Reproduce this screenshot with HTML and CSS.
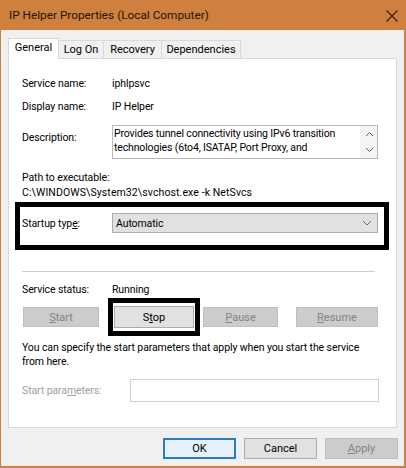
FILE: index.html
```html
<!DOCTYPE html>
<html>
<head>
<meta charset="utf-8">
<title>IP Helper Properties</title>
<link rel="stylesheet" href="styles.css">
</head>
<body>
<div class="window">
  <div class="titlebar">
    <span class="title">IP Helper Properties (Local Computer)</span>
    <svg class="close" width="12" height="12" viewBox="0 0 12 12"><path d="M0.5 0.5 L11.5 11.5 M11.5 0.5 L0.5 11.5" stroke="#3a1e0c" stroke-width="1.1" fill="none"/></svg>
  </div>
  <div class="client">
    <div class="tabs">
      <div class="tab active t-general">General</div>
      <div class="tab t-logon">Log On</div>
      <div class="tab t-recovery">Recovery</div>
      <div class="tab t-deps">Dependencies</div>
    </div>
    <div class="panel">
      <div class="row r-service"><span class="label">Service name:</span><span class="value">iphlpsvc</span></div>
      <div class="row r-display"><span class="label">Display name:</span><span class="value">IP Helper</span></div>
      <div class="row r-desc">
        <span class="label desc-label">Description:</span>
        <div class="desc-box">
          <div class="desc-text">Provides tunnel connectivity using IPv6 transition technologies (6to4, ISATAP, Port Proxy, and</div>
          <div class="scroll">
            <svg width="9" height="6" viewBox="0 0 9 6"><path d="M1 5 L4.5 1.5 L8 5" stroke="#606060" stroke-width="1" fill="none"/></svg>
            <svg width="9" height="6" viewBox="0 0 9 6"><path d="M1 1 L4.5 4.5 L8 1" stroke="#606060" stroke-width="1" fill="none"/></svg>
          </div>
        </div>
      </div>
      <div class="path-label">Path to executable:</div>
      <div class="path-value">C:\WINDOWS\System32\svchost.exe -k NetSvcs</div>
      <div class="highlight startup">
        <span class="label">Startup typ<u>e</u>:</span>
        <div class="combo">
          <span>Automatic</span>
          <svg width="10" height="6" viewBox="0 0 10 6"><path d="M1 1 L5 5 L9 1" stroke="#6a6a6a" stroke-width="1" fill="none"/></svg>
        </div>
      </div>
      <div class="sep"></div>
      <div class="row r-status"><span class="label">Service status:</span><span class="value">Running</span></div>
      <div class="btn-row">
        <button class="btn disabled b-start"><u>S</u>tart</button>
        <div class="highlight stop-wrap"><button class="btn b-stop">S<u>t</u>op</button></div>
        <button class="btn disabled b-pause"><u>P</u>ause</button>
        <button class="btn disabled b-resume"><u>R</u>esume</button>
      </div>
      <p class="note">You can specify the start parameters that apply when you start the service from here.</p>
      <div class="params">
        <span class="label params-label">Start para<u>m</u>eters:</span>
        <div class="input"></div>
      </div>
    </div>
    <div class="dialog-buttons">
      <button class="btn dbtn default">OK</button>
      <button class="btn dbtn">Cancel</button>
      <button class="btn dbtn disabled"><u>A</u>pply</button>
    </div>
  </div>
</div>
</body>
</html>
```
FILE: styles.css
```css
* { box-sizing: border-box; }
html, body { margin: 0; padding: 0; background: #f0f0f0; }
body {
  font-family: Roboto, "Liberation Sans", Arial, sans-serif;
  font-size: 10.5px;
  letter-spacing: -0.1px;
  color: #000;
}

.window {
  width: 406px;
  height: 468px;
  background: #f0f0f0;
  border-left: 1px solid #cf7f3e;
  border-right: 2px solid #cf7f3e;
  border-bottom: 2px solid #cf7f3e;
  display: flex;
  flex-direction: column;
}

.titlebar {
  height: 30px;
  background: #cf7f3e;
  display: flex;
  align-items: center;
  justify-content: space-between;
  padding: 0 8px 0 8px;
  margin-left: -1px;
  margin-right: -2px;
}
.title { font-size: 11.8px; letter-spacing: 0; color: #22150c; padding-left: 1px; }
.close { display: block; margin-top: 1px; }

.client { padding: 8px 7px 0 7px; }

.tabs {
  display: flex;
  align-items: flex-end;
  height: 21px;
  margin-bottom: -1px;
  position: relative;
  z-index: 1;
}
.tab {
  height: 19px;
  border: 1px solid #d9d9d9;
  border-left: none;
  background: #f0f0f0;
  display: flex;
  align-items: center;
  justify-content: center;
  font-size: 11px;
  letter-spacing: 0;
  padding-bottom: 1px;
}
.tab.active {
  height: 21px;
  background: #fff;
  border-left: 1px solid #d9d9d9;
  border-bottom: none;
  padding-bottom: 3px;
}
.t-general { width: 51px; }
.t-logon { width: 45px; }
.t-recovery { width: 58px; }
.t-deps { width: 79px; }

.panel {
  height: 370px;
  background: #fff;
  border: 1px solid #d9d9d9;
  padding: 17px 18px 0 13px;
}

.row { display: flex; line-height: 15px; }
.label { width: 90px; flex: none; }
.r-display { margin-top: 8px; }
.r-desc { margin-top: 11px; align-items: flex-start; }
.desc-label { margin-top: 5px; }

.desc-box {
  flex: 1;
  height: 34px;
  border: 1px solid #b9b9b9;
  display: flex;
  overflow: hidden;
}
.desc-text {
  flex: 1;
  line-height: 13.5px;
  padding: 1px 0 0 1px;
  letter-spacing: -0.15px;
}
.scroll {
  width: 17px;
  flex: none;
  background: #f4f4f4;
  display: flex;
  flex-direction: column;
  align-items: center;
  justify-content: space-between;
  padding: 5px 0 5px 1px;
}
.scroll svg { display: block; }

.path-label { margin-top: 11px; line-height: 15px; }
.path-value { line-height: 15px; letter-spacing: 0.1px; }

.highlight { border: 5px solid #000; }
.startup {
  margin: 2px -11px 0 -7px;
  padding: 6px 6px 12px 2px;
  display: flex;
  align-items: center;
}
.combo {
  flex: 1;
  height: 20px;
  background: #e1e1e1;
  border: 1px solid #adadad;
  display: flex;
  align-items: center;
  justify-content: space-between;
  padding: 0 5px 0 3px;
}
.combo svg { display: block; }

.sep {
  margin: 21px 3px 0 0;
  height: 1px;
  background: #cfcfcf;
}
.r-status { margin-top: 10px; }

.btn-row {
  display: flex;
  align-items: center;
  margin-top: 1px;
}
.btn {
  font-family: inherit;
  font-size: 11px;
  letter-spacing: 0;
  height: 20px;
  background: #e1e1e1;
  border: 1px solid #adadad;
  color: #000;
  padding: 0;
  margin: 0;
  display: flex;
  align-items: center;
  justify-content: center;
}
.btn.disabled {
  background: #cccccc;
  border-color: #bfbfbf;
  color: #838383;
}
.b-start { width: 76px; margin-left: 1px; }
.stop-wrap { margin-left: 9px; width: 92px; height: 38px; padding: 3px 1px; }
.b-stop { width: 80px; height: 22px; }
.b-pause { width: 75px; margin-left: 3px; }
.b-resume { width: 82px; margin-left: 18px; }

.note { margin: 5px 0 0 0; line-height: 14px; max-width: 352px; }

.params {
  display: flex;
  align-items: center;
  margin-top: 10px;
}
.params-label { width: 108px; color: #a0a0a0; }
.input {
  flex: 1;
  height: 23px;
  border: 1px solid #d0d0d0;
  background: #fff;
  margin-right: -1px;
}

.dialog-buttons {
  display: flex;
  justify-content: flex-end;
  gap: 8px;
  margin-top: 10px;
  margin-right: -1px;
}
.dbtn { width: 73px; height: 21px; }
.dbtn.default {
  border: 2px solid #2f7bbf;
  background: #e5f1fb;
}
```
